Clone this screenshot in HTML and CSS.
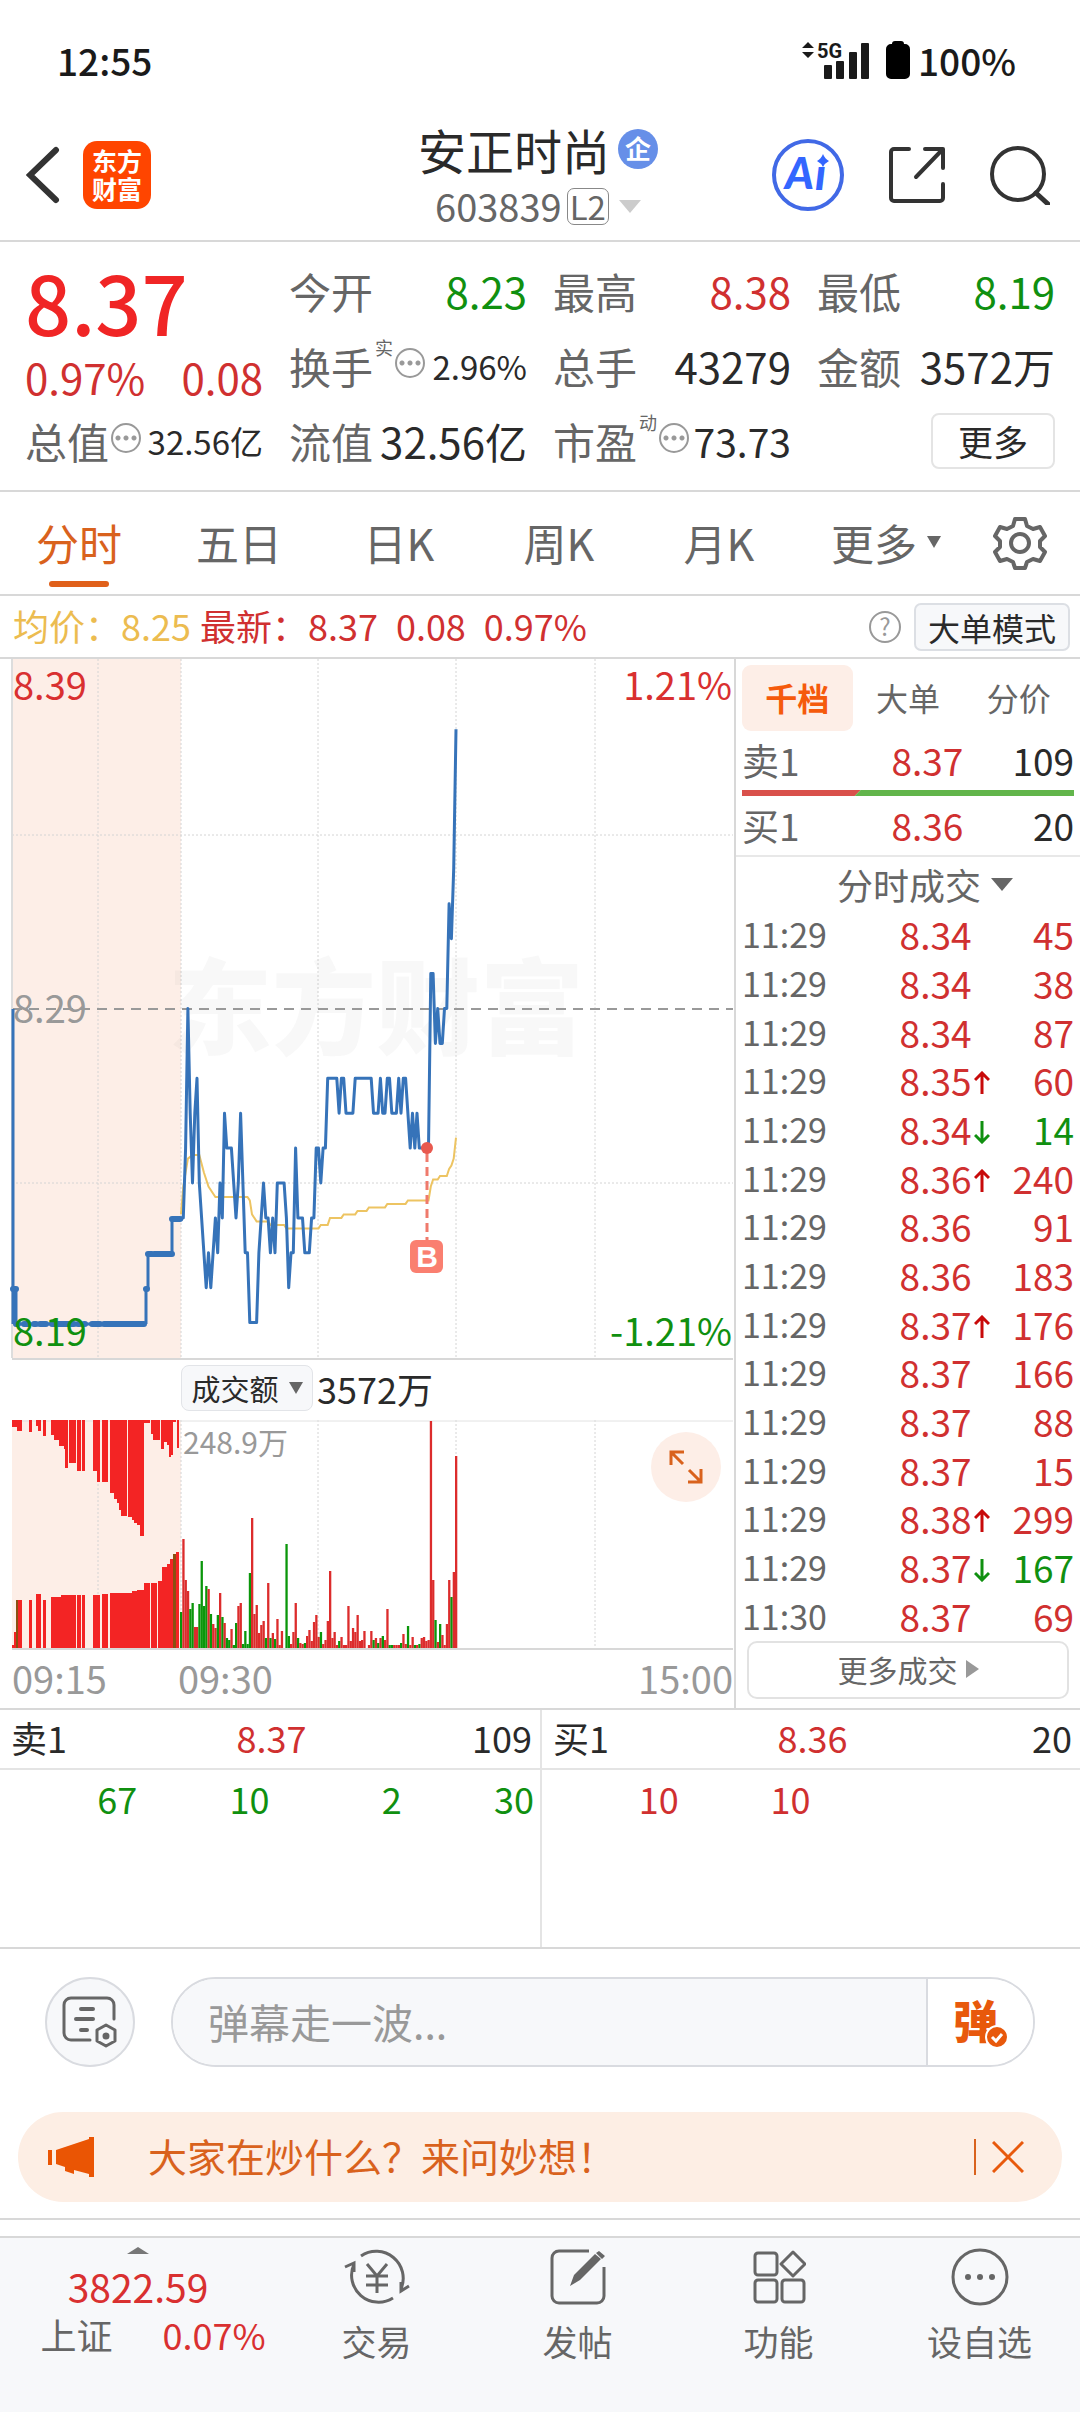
FILE: index.html
```html
<!DOCTYPE html>
<html lang="zh-CN">
<head>
<meta charset="utf-8">
<meta name="viewport" content="width=device-width, initial-scale=1">
<title>安正时尚 603839</title>
<link rel="stylesheet" href="styles.css">
</head>
<body>

<!-- status bar -->
<div class="status">
  <span class="clock">12:55</span>
  <span class="status-right">
    <svg width="68" height="40" viewBox="0 0 68 40">
      <path d="M0 8l6-6 6 6zM0 12l6 6 6-6z" fill="#1a1a1a"/>
      <text x="15" y="18" class="net">5G</text>
      <g fill="#1a1a1a"><rect x="22" y="25" width="8" height="14" rx="1"/><rect x="34" y="21" width="8" height="18" rx="1"/><rect x="47" y="12" width="8" height="27" rx="1"/><rect x="59" y="3" width="8" height="36" rx="1"/></g>
    </svg>
    <svg width="24" height="40" viewBox="0 0 24 40"><path d="M9 1h6a3 3 0 0 1 3 3h1a5 5 0 0 1 5 5v25a5 5 0 0 1-5 5H5a5 5 0 0 1-5-5V9a5 5 0 0 1 5-5h1a3 3 0 0 1 3-3z"/></svg>
    <span class="clock">100%</span>
  </span>
</div>

<header class="topbar">
  <div class="topbar-left">
    <button class="plain" aria-label="返回"><svg width="34" height="58" viewBox="0 0 34 58"><path d="M30 4L4 29l26 25" fill="none" stroke="#333" stroke-width="6" stroke-linecap="round"/></svg></button>
    <a href="#" class="logo">东方<br>财富</a>
  </div>
  <div class="title">
    <h1>安正时尚 <span class="ent">企</span></h1>
    <div class="code">603839<span class="l2">L2</span><i class="tri tri-light"></i></div>
  </div>
  <div class="topbar-right">
    <button class="plain" aria-label="AI"><svg width="72" height="72" viewBox="0 0 72 72">
      <circle cx="36" cy="36" r="34" fill="none" stroke="#4169e6" stroke-width="4"/>
      <text x="13" y="50" class="ai">A</text><text x="43" y="51" class="ai">ı</text>
      <path d="M51 15q2 5 6 7q-4 2-6 6q-2-4-6-6q4-2 6-7z" fill="#3366ff"/></svg></button>
    <button class="plain" aria-label="分享"><svg width="58" height="58" viewBox="0 0 58 58"><path d="M21 3H6a3 3 0 0 0-3 3v46a3 3 0 0 0 3 3h46a3 3 0 0 0 3-3V38M37 3h18v19M54 4L28 31" fill="none" stroke="#333" stroke-width="4" stroke-linecap="round" stroke-linejoin="round"/></svg></button>
    <button class="plain" aria-label="搜索"><svg width="60" height="60" viewBox="0 0 60 60"><circle cx="28" cy="29" r="26" fill="none" stroke="#333" stroke-width="4"/><path d="M46 48l12 11" stroke="#333" stroke-width="5" stroke-linecap="round"/></svg></button>
  </div>
</header>

<!-- quote -->
<section class="quote">
  <div class="qcol">
    <div class="price red">8.37</div>
    <div class="change"><span>0.97%</span><span>0.08</span></div>
    <div class="q last"><label>总值</label><i class="dots"></i><b class="small">32.56亿</b></div>
  </div>
  <div class="qcol">
    <div class="q"><label>今开</label><b class="green">8.23</b></div>
    <div class="q"><label>换手</label><sup>实</sup><i class="dots"></i><b class="small">2.96%</b></div>
    <div class="q"><label>流值</label><b>32.56亿</b></div>
  </div>
  <div class="qcol">
    <div class="q"><label>最高</label><b class="red2">8.38</b></div>
    <div class="q"><label>总手</label><b>43279</b></div>
    <div class="q"><label>市盈</label><sup>动</sup><i class="dots"></i><b class="mid">73.73</b></div>
  </div>
  <div class="qcol">
    <div class="q"><label>最低</label><b class="green">8.19</b></div>
    <div class="q"><label>金额</label><b>3572万</b></div>
    <div class="q"><button class="more">更多</button></div>
  </div>
</section>

<nav class="tabs">
  <a href="#" class="on">分时</a>
  <a href="#">五日</a>
  <a href="#">日K</a>
  <a href="#">周K</a>
  <a href="#">月K</a>
  <a href="#" class="drop">更多<i class="tri tri-small"></i></a>
  <button class="plain" aria-label="设置"><svg width="54" height="54" viewBox="0 0 54 54" fill="none" stroke="#666" stroke-width="4" stroke-linejoin="round"><path d="M22 3h10l2 7 6 3 7-2 5 9-5 5v6l5 5-5 9-7-2-6 3-2 6H22l-2-6-6-3-7 2-5-9 5-5v-6l-5-5 5-9 7 2 6-3z"/><circle cx="27" cy="27" r="9"/></svg></button>
</nav>

<div class="legend">
  <span class="gold">均价：8.25</span>
  <span class="red2">最新：8.37</span>
  <span class="red2 sp">0.08</span>
  <span class="red2 sp">0.97%</span>
  <span class="help">?</span>
  <button class="mode">大单模式</button>
</div>

<main class="board">
  <div class="charts">
    <svg id="line" class="plot" viewBox="0 0 721 699">
      <rect width="169" height="699" fill="#fdeee7"/>
      <path d="M0 176H721M0 524H721M86 0V699M169 0V699M306 0V699M444 0V699M583 0V699" class="grid"/>
      <text x="156" y="388" class="mark">东方财富</text>
      <path d="M0 350H721" stroke="#999" stroke-width="2" stroke-dasharray="10 7"/>
      <path d="M0 0V699" stroke="#ddd" stroke-width="2"/>
      <polyline id="avg" fill="none" stroke="#edc462" stroke-width="2"/>
      <path d="M1 350V665M4 630V665H132M134 665V630M136 630V595H160V560H171" fill="none" stroke="#3673b9" stroke-width="3"/>
      <path d="M1 630H4M4 665H6M12 665H16M22 665H24M28 665H34M40 665H62M66 665H68M72 665H73M80 665H88M92 665H132M134 630h1M136 595H140M142 595H160M160 560H168" fill="none" stroke="#3673b9" stroke-width="6" stroke-linecap="round"/>
      <polyline id="now" fill="none" stroke="#3673b9" stroke-width="3" stroke-linejoin="round"/>
      <path d="M415 494V581" stroke="#ef7a6c" stroke-width="3" stroke-dasharray="9 5"/>
      <circle cx="415" cy="489" r="6" fill="#e8594f"/>
      <rect x="398" y="581" width="33" height="33" rx="6" fill="#fa7f70"/>
      <text x="415" y="608" class="buy">B</text>
      <text x="1" y="41" class="ax red2">8.39</text>
      <text x="720" y="41" class="ax red2 end">1.21%</text>
      <text x="1" y="364" class="ax">8.29</text>
      <text x="1" y="687" class="ax green">8.19</text>
      <text x="720" y="687" class="ax green end">-1.21%</text>
    </svg>

    <div class="volbar">
      <button class="pick">成交额<i class="tri tri-small"></i></button>
      <span>3572万</span>
    </div>

    <div class="vol">
      <svg id="vol" class="plot" viewBox="0 0 721 228">
        <rect width="169" height="228" fill="#fdeee7"/>
        <path d="M86 0V228M169 0V228M306 0V228M444 0V228M583 0V228" class="grid"/>
        <path d="M0 1H721" stroke="#e2e2e2" stroke-width="1"/>
        <text x="171" y="34" class="volmax">248.9万</text>
      </svg>
      <button class="zoom" aria-label="放大"><svg width="36" height="36" viewBox="0 0 36 36" fill="none" stroke="#d9621d" stroke-width="3"><path d="M3 16V3H16M3 3l12 12M33 20V33H20M33 33L21 21"/></svg></button>
    </div>

    <div class="axis"><span>09:15</span><span>09:30</span><span class="right">15:00</span></div>
  </div>

  <aside class="side">
    <div class="sidetabs"><button class="on">千档</button><button>大单</button><button>分价</button></div>
    <div class="level"><span>卖1</span><span class="red2">8.37</span><b>109</b></div>
    <svg class="ratio" viewBox="0 0 333 6" preserveAspectRatio="none"><path d="M0 0H119L113 6H0z" fill="#d9504b"/><path d="M119 0H333V6H113z" fill="#62b54b"/></svg>
    <div class="level"><span>买1</span><span class="red2">8.36</span><b>20</b></div>
    <button class="sidehead">分时成交<i class="tri"></i></button>
    <table class="ticks"><tbody id="ticks"></tbody></table>
    <button class="moreticks">更多成交<i class="play"></i></button>
  </aside>
</main>

<section class="depth">
  <div class="book">
    <div class="row"><span>卖1</span><span class="red2">8.37</span><span>109</span></div>
    <div class="cells green"><span>67</span><span>10</span><span>2</span><span>30</span></div>
  </div>
  <div class="book">
    <div class="row"><span>买1</span><span class="red2">8.36</span><span>20</span></div>
    <div class="cells red2"><span>10</span><span>10</span></div>
  </div>
</section>

<section class="danmu">
  <button class="round" aria-label="弹幕设置"><svg width="58" height="54" viewBox="0 0 58 54" fill="none" stroke="#666" stroke-width="3" stroke-linecap="round"><path d="M29 45H10a7 7 0 0 1-7-7V10a7 7 0 0 1 7-7h36a7 7 0 0 1 7 7v14"/><path d="M20 14H32M15 24H32M20 35H26" stroke-width="4"/><path d="M45 30l9 5v11l-9 5-9-5V35z" stroke-linejoin="round"/><circle cx="45" cy="41" r="2" fill="#666"/></svg></button>
  <div class="say">
    <input type="text" placeholder="弹幕走一波..." aria-label="弹幕">
    <button class="dan">弹<svg width="24" height="24" viewBox="0 0 24 24"><circle cx="12" cy="12" r="11" fill="#e8590c" stroke="#fff" stroke-width="2"/><path d="M7 12l4 4 6-7" fill="none" stroke="#fff" stroke-width="3"/></svg></button>
  </div>
</section>

<section class="banner">
  <svg width="46" height="40" viewBox="0 0 46 40" fill="#ea5504"><path d="M0 13h4v15H0zM8 13L41 2V0h5v40h-5v-3l-15-4v4l-9-3v-4l-9-3z"/></svg>
  <a href="#">大家在炒什么？来问妙想！</a>
  <button class="plain close" aria-label="关闭"><svg width="32" height="32" viewBox="0 0 32 32"><path d="M1 1l30 30M31 1L1 31" stroke="#e8590c" stroke-width="3"/></svg></button>
</section>

<footer class="bottom">
  <div class="index">
    <i class="up"></i>
    <div class="point">3822.59</div>
    <div class="idxrow"><span>上证</span><span class="pct">0.07%</span></div>
  </div>
  <a href="#"><svg width="66" height="58" viewBox="0 0 66 58" fill="none" stroke="#666" stroke-width="3"><path d="M17 8A27 27 0 0 1 57 41M49 50A27 27 0 0 1 10 16M1 19l9-4v9M65 38l-8 5v-9"/><path d="M23 16l10 12 10-12M22 28H44M22 37H44M33 28V45"/></svg>交易</a>
  <a href="#"><svg width="58" height="58" viewBox="0 0 58 58" fill="none" stroke="#666" stroke-width="3"><path d="M40 3H10a7 7 0 0 0-7 7v38a7 7 0 0 0 7 7h38a7 7 0 0 0 7-7V19"/><path d="M21 38l4-11L46 6l6 5-21 21zM47 5l3-2 6 5-3 3z" fill="#666" stroke="none"/></svg>发帖</a>
  <a href="#"><svg width="54" height="58" viewBox="0 0 54 58" fill="none" stroke="#666" stroke-width="3"><rect x="3" y="5" width="22" height="22" rx="3"/><rect x="3" y="32" width="22" height="22" rx="3"/><rect x="30" y="32" width="22" height="22" rx="3"/><path d="M41 4l12 12-12 12-12-12z" stroke-linejoin="round"/></svg>功能</a>
  <a href="#"><svg width="58" height="58" viewBox="0 0 58 58"><circle cx="29" cy="29" r="27" fill="none" stroke="#666" stroke-width="3"/><g fill="#666"><circle cx="17" cy="29" r="3"/><circle cx="29" cy="29" r="3"/><circle cx="41" cy="29" r="3"/></g></svg>设自选</a>
</footer>

<script src="chart.js"></script>
</body>
</html>
```

FILE: styles.css
```css
* {
    box-sizing: border-box;
}
body {
    margin: 0;
    background: #fff;
    color: #2a2a2a;
    font-family: "Noto Sans CJK SC", sans-serif;
    font-size: 36px;
}
button, input {
    font-family: inherit;
    font-size: inherit;
    color: inherit;
    padding: 0;
    margin: 0;
}
a {
    color: inherit;
    text-decoration: none;
}
svg {
    display: block;
}
.plain {
    background: none;
    border: 0;
}
.red { color: #f02525; }
.red2 { color: #d03030; fill: #d03030; }
.green { color: #109010; fill: #109010; }
.gold { color: #ecbc50; }

/* little triangles */
.tri {
    display: inline-block;
    border: 11px solid transparent;
    border-top: 13px solid #666;
    border-bottom: 0;
    margin-left: 10px;
}
.tri-light { border-top-color: #ccc; }
.tri-small {
    border-width: 12px 7px 0;
}

/* status bar */
.status {
    display: flex;
    justify-content: space-between;
    align-items: center;
    height: 118px;
    padding: 2px 64px 0 57px;
}
.clock {
    font-weight: 500;
    font-size: 37px;
    color: #1a1a1a;
}
.status-right {
    display: flex;
    align-items: center;
}
.status-right svg { margin-right: 8px; }
.status-right svg:first-child { margin-right: 16px; }
.net {
    font: bold 20px Roboto, sans-serif;
    fill: #1a1a1a;
}

/* title bar */
.topbar {
    display: grid;
    grid-template-columns: 1fr auto 1fr;
    align-items: center;
    height: 124px;
    padding: 0 30px 10px 26px;
    border-bottom: 2px solid #d8d8d8;
}
.topbar-left, .topbar-right {
    display: flex;
    align-items: center;
}
.topbar-right {
    justify-content: flex-end;
    gap: 44px;
}
.logo {
    width: 68px;
    height: 68px;
    margin-left: 23px;
    padding-top: 5px;
    border-radius: 14px;
    background: #ff4500;
    color: #fff;
    font-size: 25px;
    line-height: 28px;
    font-weight: bold;
    text-align: center;
}
.title { text-align: center; }
h1 {
    display: flex;
    align-items: center;
    gap: 8px;
    margin: 0;
    font-size: 48px;
    line-height: 62px;
    font-weight: 400;
}
.ent {
    width: 40px;
    height: 40px;
    border-radius: 50%;
    background: #668fe8;
    color: #fff;
    font-size: 26px;
    line-height: 38px;
    font-weight: bold;
}
.code {
    display: flex;
    align-items: center;
    justify-content: center;
    color: #666;
    font-size: 38px;
    line-height: 52px;
}
.l2 {
    margin-left: 5px;
    padding: 0 2px;
    border: 1px solid #888;
    border-radius: 7px;
    font-size: 33px;
    line-height: 35px;
}
.ai {
    font: italic 900 44px Lato, sans-serif;
    fill: #3366ff;
}

/* quote */
.quote {
    display: grid;
    grid-template-columns: repeat(4, 1fr);
    gap: 26px;
    padding: 11px 25px 12px;
    border-bottom: 2px solid #d8d8d8;
}
.price {
    padding-top: 14px;
    font-size: 81px;
    line-height: 68px;
    font-weight: 500;
}
.change {
    display: flex;
    justify-content: space-between;
    padding-top: 16px;
    font-size: 42px;
    line-height: 52px;
    color: #d03030;
}
.q {
    display: flex;
    align-items: center;
    height: 75px;
    font-size: 42px;
    white-space: nowrap;
}
.q label { color: #666; }
.q b {
    margin-left: auto;
    font-weight: 400;
}
.q .small { font-size: 33px; }
.q .mid { font-size: 39px; }
.q sup {
    align-self: flex-start;
    margin: 6px 0 0 2px;
    font-size: 18px;
    line-height: 26px;
    color: #666;
}
.dots {
    width: 30px;
    height: 30px;
    margin: 0 0 5px 2px;
    border: 2px solid #999;
    border-radius: 50%;
    background: radial-gradient(circle, #999 2px, transparent 3px) 50% 50% / 8px 8px repeat-x;
    background-clip: content-box;
    padding: 0 1px;
}
.more {
    width: 124px;
    height: 56px;
    margin-left: auto;
    border: 2px solid #e4e4e4;
    border-radius: 8px;
    background: #fff;
    font-size: 35px;
    line-height: 48px;
}

/* period tabs */
.tabs {
    display: grid;
    grid-template-columns: repeat(6, 4fr) 3fr;
    height: 104px;
    border-bottom: 2px solid #d8d8d8;
    color: #666;
    font-size: 43px;
}
.tabs a {
    display: flex;
    align-items: center;
    justify-content: center;
    position: relative;
    padding: 0 2px 2px 0;
}
.tabs .drop { padding-left: 14px; }
.tabs .on { color: #d9621d; }
.tabs .on::after {
    content: "";
    position: absolute;
    bottom: 7px;
    width: 60px;
    height: 6px;
    border-radius: 3px;
    background: #e0601a;
}
.tabs button {
    display: flex;
    align-items: center;
    justify-content: center;
}

.legend {
    display: flex;
    align-items: center;
    height: 63px;
    padding: 0 10px 0 13px;
    border-bottom: 2px solid #d8d8d8;
    white-space: nowrap;
}
.legend span {
    padding-bottom: 3px;
    line-height: 58px;
}
.legend .red2 { margin-left: 9px; }
.legend .sp { margin-left: 18px; }
.legend .help {
    width: 32px;
    height: 32px;
    margin-left: auto;
    padding: 0;
    border: 2px solid #999;
    border-radius: 50%;
    color: #999;
    font-size: 24px;
    line-height: 26px;
    text-align: center;
}
.mode {
    width: 156px;
    height: 48px;
    margin-left: 13px;
    border: 2px solid #dcdfe4;
    border-radius: 7px;
    background: #f7f8fa;
    font-size: 32px;
    line-height: 42px;
}

/* charts and right column */
.board {
    display: grid;
    grid-template-columns: 734fr 346fr;
    border-bottom: 2px solid #d8d8d8;
}
.charts { padding: 0 1px 0 12px; }
.plot {
    width: 100%;
    height: auto;
    border-bottom: 2px solid #d8d8d8;
    overflow: visible;
}
.grid {
    fill: none;
    stroke: #d4d4d4;
    stroke-dasharray: 2 2;
}
.mark {
    font-size: 104px;
    font-weight: 900;
    fill: #808080;
    fill-opacity: .06;
}
.ax {
    font-size: 38px;
    fill: #999;
}
.ax.red2 { fill: #d93030; }
.ax.green { fill: #109010; }
.end { text-anchor: end; }
.buy {
    font: bold 30px "Liberation Sans", sans-serif;
    fill: #fff;
    text-anchor: middle;
}
.volmax {
    font-size: 30px;
    fill: #999;
}
.volbar {
    display: flex;
    align-items: center;
    height: 60px;
    padding: 0 0 4px 169px;
    line-height: 54px;
}
.pick {
    display: flex;
    align-items: center;
    justify-content: center;
    width: 132px;
    height: 46px;
    margin-right: 4px;
    border: 1px solid #e2e4e8;
    border-radius: 8px;
    background: #f7f8fa;
    font-size: 29px;
    line-height: 40px;
}
.vol { position: relative; }
.zoom {
    position: absolute;
    top: 12px;
    right: 12px;
    width: 70px;
    height: 70px;
    padding: 17px;
    border: 0;
    border-radius: 50%;
    background: #fdeee7;
}
.axis {
    display: flex;
    height: 58px;
    gap: 71px;
    font-size: 38px;
    line-height: 56px;
    color: #999;
}
.axis .right { margin-left: auto; }

.side {
    display: flex;
    flex-direction: column;
    padding: 6px 6px 8px;
    border-left: 2px solid #d8d8d8;
}
.sidetabs {
    display: grid;
    grid-template-columns: repeat(3, 1fr);
}
.sidetabs button {
    height: 66px;
    padding-bottom: 3px;
    border: 0;
    border-radius: 9px;
    background: none;
    color: #666;
    font-size: 32px;
}
.sidetabs .on {
    background: #fdeee7;
    color: #f55a0c;
    font-weight: bold;
}
.level {
    display: grid;
    grid-template-columns: 1fr 1fr 1fr;
    line-height: 59px;
    color: #666;
    font-size: 37px;
}
.level .red2 { text-align: right; }
.level b {
    font-weight: 400;
    text-align: right;
    color: #2a2a2a;
}
.ratio {
    width: 100%;
    height: 6px;
}
.sidehead {
    display: flex;
    align-items: center;
    justify-content: center;
    height: 56px;
    margin: 0 -6px;
    padding-left: 34px;
    border: 0;
    border-top: 2px solid #e8e8e8;
    background: none;
    color: #666;
    font-size: 36px;
}
.ticks {
    width: 100%;
    height: 730px;
    border-collapse: collapse;
    table-layout: fixed;
    font-size: 37px;
    line-height: 40px;
}
.ticks td { padding: 0 0 2px; }
.ticks td:first-child {
    color: #666;
    font-size: 34px;
}
.ticks td:nth-child(2) {
    width: 46%;
    padding-left: 58px;
}
.ticks td:last-child {
    width: 24%;
    text-align: right;
}
.ticks svg {
    display: inline-block;
    margin-left: 2px;
    vertical-align: 1px;
}
.moreticks {
    display: flex;
    align-items: center;
    justify-content: center;
    height: 58px;
    margin: 0 5px;
    padding-bottom: 2px;
    border: 2px solid #e2e2e2;
    border-radius: 10px;
    background: #fff;
    color: #666;
    font-size: 30px;
}
.play {
    margin-left: 8px;
    border: 9px solid transparent;
    border-left: 13px solid #999;
    border-right: 0;
}

/* five level queue */
.depth {
    display: grid;
    grid-template-columns: 1fr 1fr;
    height: 239px;
    border-bottom: 2px solid #d8d8d8;
}
.book + .book { border-left: 2px solid #e4e4e4; }
.row {
    display: grid;
    grid-template-columns: 1fr 1fr 1fr;
    padding: 0 8px 3px 11px;
    border-bottom: 2px solid #e4e4e4;
    line-height: 55px;
}
.row span:nth-child(2) { text-align: center; }
.row span:last-child { text-align: right; }
.cells {
    display: grid;
    grid-template-columns: repeat(4, 1fr);
    padding: 0 6px 0 5px;
    line-height: 56px;
    text-align: right;
}

/* comment box */
.danmu {
    display: flex;
    gap: 36px;
    padding: 28px 45px 45px;
}
.round {
    display: flex;
    align-items: center;
    justify-content: center;
    width: 90px;
    height: 90px;
    border: 2px solid #d9dbe0;
    border-radius: 50%;
    background: #f7f8fa;
}
.say {
    display: flex;
    flex: 1;
    height: 90px;
    border: 2px solid #d9dbe0;
    border-radius: 45px;
    overflow: hidden;
}
.say input {
    flex: 1;
    min-width: 0;
    padding: 0 0 3px 35px;
    border: 0;
    background: #f7f8fa;
    font-size: 41px;
}
.say input::placeholder { color: #999; }
.dan {
    position: relative;
    width: 107px;
    padding: 0 10px 4px 0;
    border: 0;
    border-left: 2px solid #d9dbe0;
    background: #fff;
    color: #e8590c;
    font-size: 45px;
    line-height: 76px;
    font-weight: 900;
}
.dan svg {
    position: absolute;
    right: 24px;
    bottom: 16px;
}

.banner {
    display: flex;
    align-items: center;
    height: 90px;
    margin: 0 18px;
    padding: 0 38px 0 30px;
    border-radius: 45px;
    background: #fdeee4;
    color: #d9621d;
    font-size: 39px;
    line-height: 80px;
}
.banner a {
    margin-left: 54px;
    padding-bottom: 4px;
}
.close {
    margin-left: auto;
    padding: 2px 0 2px 16px;
    border-left: 2px solid #d9621d;
}

/* bottom bar */
.bottom {
    display: grid;
    grid-template-columns: 276fr repeat(4, 201fr);
    height: 176px;
    margin-top: 34px;
    border-top: 2px solid #d8d8d8;
    background: #f7f8fa;
    color: #666;
    box-shadow: 0 -16px 0 #fff, 0 -18px 0 #d8d8d8;
}
.bottom a {
    display: flex;
    flex-direction: column;
    align-items: center;
    padding-top: 10px;
    font-size: 35px;
    line-height: 70px;
}
.index {
    display: flex;
    flex-direction: column;
    align-items: center;
    padding-top: 9px;
}
.up {
    border: 11px solid transparent;
    border-top: 0;
    border-bottom: 7px solid #777;
}
.point {
    margin-top: 5px;
    font-size: 39px;
    line-height: 54px;
    color: #d93030;
}
.idxrow {
    display: flex;
    gap: 50px;
    padding-left: 30px;
    line-height: 42px;
}
.pct { color: #d93030; }
```

FILE: chart.js
```js
var NS = "http://www.w3.org/2000/svg";
var OPEN_X = 169;
var STEP = 275 / 120;

// [minute after 09:30, price]
var now = [
  [0,8.23],[1,8.23],[2,8.25],[3,8.29],[4,8.26],[5,8.24],[6,8.26],[7,8.27],[8,8.24],[9,8.23],
  [11,8.21],[12,8.22],[13,8.21],[15,8.23],[16,8.22],[17,8.24],[18,8.23],[19,8.26],[20,8.25],
  [22,8.25],[24,8.23],[25,8.24],[26,8.26],[28,8.22],[29,8.22],[30,8.20],[33,8.20],[34,8.22],
  [36,8.24],[37,8.23],[38,8.23],[39,8.22],[40,8.23],[41,8.22],[42,8.24],[45,8.24],[46,8.23],
  [47,8.21],[48,8.22],[49,8.22],[50,8.25],[51,8.23],[53,8.23],[54,8.22],[56,8.22],[57,8.23],
  [58,8.23],[59,8.25],[60,8.25],[61,8.24],[62,8.25],[63,8.25],[64,8.27],[68,8.27],[69,8.26],
  [70,8.27],[71,8.27],[72,8.26],[75,8.26],[76,8.27],[83,8.27],[84,8.26],[86,8.26],[87,8.27],
  [88,8.26],[89,8.26],[90,8.27],[91,8.27],[92,8.26],[94,8.26],[95,8.27],[96,8.26],[97,8.27],
  [98,8.27],[100,8.25],[101,8.26],[102,8.25],[103,8.26],[104,8.25],[108,8.25],[109,8.30],
  [110,8.30],[111,8.28],[112,8.29],[113,8.28],[114,8.28],[115,8.29],[116,8.29],[117,8.32],
  [118,8.31],[119,8.33],[120,8.37]
];
var avg = [
  [0,8.231],[1,8.239],[3,8.247],[5,8.248],[8,8.248],[10,8.243],[12,8.239],[15,8.236],[29,8.236],
  [30,8.235],[31,8.231],[33,8.229],[38,8.229],[39,8.228],[45,8.228],[46,8.227],[60,8.227],
  [61,8.228],[64,8.228],[65,8.230],[70,8.230],[71,8.231],[76,8.231],[77,8.232],[81,8.232],
  [82,8.233],[89,8.233],[90,8.234],[98,8.234],[99,8.235],[108,8.235],[109,8.239],[110,8.241],
  [112,8.241],[113,8.242],[116,8.242],[117,8.244],[118,8.245],[119,8.247],[120,8.253]
];

function toPoints(list) {
  return list.map(function (p) {
    return (OPEN_X + p[0] * STEP).toFixed(1) + "," + (349.5 + (8.29 - p[1]) * 3490).toFixed(1);
  }).join(" ");
}
document.getElementById("now").setAttribute("points", toPoints(now));
document.getElementById("avg").setAttribute("points", toPoints(avg));

// one bar per minute, negative = falling
var volume = [
  -36,109,68,57,-39,-45,21,21,-44,-87,-42,-62,59,-34,24,20,-33,55,-31,25,-10,-8,19,-3,-25,42,45,
  -4,-17,-4,-75,130,34,43,15,23,27,-10,65,-10,15,-9,29,3,17,0,-104,-12,4,16,45,-10,5,4,-5,12,18,
  7,26,33,11,-16,4,8,27,77,10,16,3,-7,11,3,3,42,7,20,16,33,7,8,17,0,3,17,-8,10,-5,10,-12,8,39,-3,
  -3,3,3,3,-5,14,4,-22,3,11,-3,3,-4,10,11,7,8,227,68,-28,6,-24,13,3,24,68,-51,76,192
];
// auction bars: [x, width, height]
var hang = [
  [0,5,7],[5,5,11],[17,3,12],[24,2,6],[26,3,11],[31,3,16],[39,3,15],[42,5,20],[47,5,26],[52,1,29],
  [53,3,48],[57,7,43],[65,4,51],[70,3,51],[81,4,51],[85,3,62],[90,6,62],[98,4,73],[102,3,79],
  [105,2,83],[107,2,90],[109,6,96],[116,4,97],[120,2,100],[122,3,103],[125,3,105],[128,4,116],
  [132,6,3],[139,2,14],[141,7,20],[149,3,29],[152,3,22],[155,2,25],[157,2,37],[159,2,35],[161,3,2],
  [165,2,28]
];
var stand = [
  [0,2,3],[2,2,16],[4,2,-48],[6,4,48],[17,3,48],[24,5,54],[31,3,48],[39,10,51],[49,15,53],
  [65,4,53],[70,3,53],[81,7,53],[90,6,54],[98,4,55],[102,18,55],[120,5,57],[125,7,58],[132,6,65],
  [139,6,65],[146,4,67],[150,5,81],[155,3,84],[158,3,89],[161,3,-94],[164,3,96]
];

var vol = document.getElementById("vol");
function bar(x, y, w, h, color) {
  var r = document.createElementNS(NS, "rect");
  r.setAttribute("x", x);
  r.setAttribute("y", y);
  r.setAttribute("width", w);
  r.setAttribute("height", h);
  r.setAttribute("fill", color);
  vol.appendChild(r);
}
hang.forEach(function (b) {
  bar(b[0], 0, b[1], b[2], "#f32424");
});
stand.forEach(function (b) {
  bar(b[0], 228 - Math.abs(b[2]), b[1], Math.abs(b[2]), b[2] < 0 ? "#8a5010" : "#f32424");
});
volume.forEach(function (v, i) {
  var h = Math.abs(v);
  bar((OPEN_X + i * STEP - 1).toFixed(1), 228 - h, 2.3, h, v < 0 ? "#0a960a" : "#dc2c2c");
});

// time, price, lots, direction of the arrow
var ticks = [
  ["11:29","8.34",45],["11:29","8.34",38],["11:29","8.34",87],["11:29","8.35",60,"up"],
  ["11:29","8.34",14,"down"],["11:29","8.36",240,"up"],["11:29","8.36",91],["11:29","8.36",183],
  ["11:29","8.37",176,"up"],["11:29","8.37",166],["11:29","8.37",88],["11:29","8.37",15],
  ["11:29","8.38",299,"up"],["11:29","8.37",167,"down"],["11:30","8.37",69]
];
var arrows = {
  up: '<svg width="16" height="24" viewBox="0 0 16 24" fill="none" stroke="#c80a0a" stroke-width="3"><path d="M8 23V3M1 9l7-7 7 7"/></svg>',
  down: '<svg width="16" height="24" viewBox="0 0 16 24" fill="none" stroke="#109010" stroke-width="3"><path d="M8 1V21M1 15l7 7 7-7"/></svg>'
};
document.getElementById("ticks").innerHTML = ticks.map(function (t) {
  return "<tr><td>" + t[0] + '</td><td class="red2">' + t[1] + (arrows[t[3]] || "") +
    '</td><td class="' + (t[3] == "down" ? "green" : "red2") + '">' + t[2] + "</td></tr>";
}).join("");
```
